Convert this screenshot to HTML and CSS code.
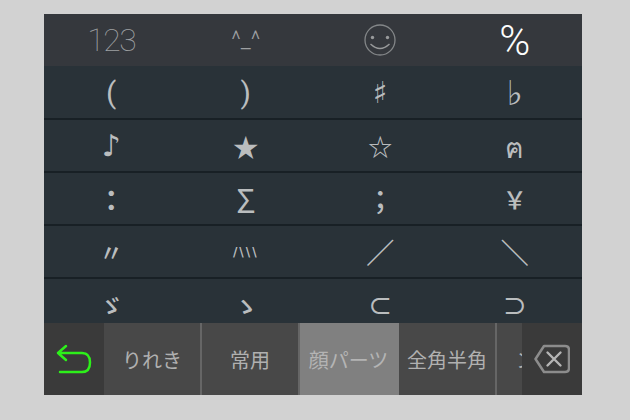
FILE: index.html
```html
<!DOCTYPE html>
<html lang="ja">
<head>
    <meta charset="UTF-8">
    <title>Keyboard</title>
    <link rel="stylesheet" href="styles.css">
</head>
<body>
    <div class="keyboard">
        <div class="top-tabs">
            <div class="top-tab tab-num">123</div>
            <div class="top-tab tab-kao">^_^</div>
            <div class="top-tab">
                <svg width="34" height="34" viewBox="0 0 34 34">
                    <circle cx="17" cy="17" r="15" fill="none" stroke="#85888a" stroke-width="1.3"/>
                    <circle cx="9.5" cy="14.5" r="1.7" fill="#9a9c9d"/>
                    <circle cx="24.5" cy="14.5" r="1.7" fill="#9a9c9d"/>
                    <path d="M7.5 21 Q17 30 26.5 21" fill="none" stroke="#9a9c9d" stroke-width="1.4"/>
                </svg>
            </div>
            <div class="top-tab tab-active">%</div>
        </div>

        <div class="grid">
            <div class="row">
                <div class="key key-paren">(</div>
                <div class="key key-paren">)</div>
                <div class="key key-music">♯</div>
                <div class="key key-flat">♭</div>
            </div>
            <div class="row">
                <div class="key key-music">♪</div>
                <div class="key key-big">★</div>
                <div class="key key-bold">☆</div>
                <div class="key key-thai">ฅ</div>
            </div>
            <div class="row">
                <div class="key key-colon">：</div>
                <div class="key key-sigma">Σ</div>
                <div class="key key-semi">；</div>
                <div class="key key-bold">￥</div>
            </div>
            <div class="row">
                <div class="key key-bold">〃</div>
                <div class="key key-small">/\\\</div>
                <div class="key key-wide">／</div>
                <div class="key key-wide">＼</div>
            </div>
            <div class="row">
                <div class="key key-bold">ゞ</div>
                <div class="key key-bold">ゝ</div>
                <div class="key key-bold">⊂</div>
                <div class="key key-bold">⊃</div>
            </div>
        </div>

        <div class="bottom-bar">
            <div class="side-btn">
                <svg width="36" height="30" viewBox="0 0 36 30">
                    <path d="M10 2 L2 9 L10 16 M2 9 H26 Q34 9 34 18.5 Q34 28 26 28 H4" fill="none" stroke="#2df01a" stroke-width="2.5" stroke-linecap="round" stroke-linejoin="round"/>
                </svg>
            </div>
            <div class="cats">
                <div class="cat">りれき</div>
                <div class="cat">常用</div>
                <div class="cat cat-on">顔パーツ</div>
                <div class="cat">全角半角</div>
                <div class="cat cat-cut">ンボル</div>
            </div>
            <div class="side-btn">
                <svg width="36" height="30" viewBox="0 0 36 30">
                    <path d="M10 2 H31 Q35 2 35 6 V24 Q35 28 31 28 H10 L1.5 15 Z" fill="none" stroke="#8c8c8c" stroke-width="2.5" stroke-linejoin="round"/>
                    <path d="M13.5 8.5 L26.5 21.5 M26.5 8.5 L13.5 21.5" fill="none" stroke="#b5b5b5" stroke-width="2.4" stroke-linecap="round"/>
                </svg>
            </div>
        </div>
    </div>
</body>
</html>
```

FILE: styles.css
```css
body {
    margin: 0;
    width: 630px;
    height: 420px;
    overflow: hidden;
    background-color: #d2d2d2;
    font-family: "Noto Sans CJK JP", "DejaVu Sans", sans-serif;
    color: #bcbfc0;
}

.keyboard {
    width: 538px;
    height: 381px;
    margin: 14px 0 0 44px;
    display: flex;
    flex-direction: column;
    background-color: #293238;
}

.top-tabs {
    display: grid;
    grid-template-columns: repeat(4, 1fr);
    height: 52px;
    background-color: #35383d;
}

.top-tab {
    display: flex;
    align-items: center;
    justify-content: center;
    color: #a0a3a5;
    font-family: Roboto, sans-serif;
    font-weight: 100;
    font-size: 32px;
    opacity: 0.99; /* grey text edges, no colour fringe */
}

.tab-num {
    letter-spacing: -1.5px;
}

.tab-kao {
    font-size: 23px;
    font-weight: 300;
}

.tab-active {
    color: #fff;
    font-size: 42px;
    font-weight: 300;
}

.grid {
    flex: 1;
    min-height: 0;
    padding-top: 1px;
    overflow: hidden;
}

.row {
    display: grid;
    grid-template-columns: repeat(4, 1fr);
    height: 53px;
    box-sizing: border-box;
    border-bottom: 2px solid #182025;
}

.key {
    display: flex;
    align-items: center;
    justify-content: center;
    font-size: 24px;
    line-height: 1;
    opacity: 0.99;
}

.key-bold {
    font-weight: 500;
}

.key-paren {
    font-family: Roboto, sans-serif;
    font-size: 30px;
}

.key-music {
    font-family: "DejaVu Sans", sans-serif;
    font-size: 30px;
    font-weight: bold;
}

.key-flat {
    font-family: "DejaVu Sans", sans-serif;
    font-size: 34px;
}

.key-big {
    font-size: 26px;
}

.key-thai {
    font-size: 28px;
    font-weight: 500;
}

.key-colon {
    font-size: 28px;
    font-weight: 700;
}

.key-semi {
    font-size: 28px;
    font-weight: 500;
}

.key-sigma {
    font-size: 32px;
}

.key-small {
    font-family: "DejaVu Sans", sans-serif;
    font-size: 12px;
    font-weight: bold;
    letter-spacing: 2px;
}

.key-wide {
    font-size: 28px;
    font-weight: 700;
}

.bottom-bar {
    display: flex;
    height: 72px;
    background-color: #484848;
}

.side-btn {
    width: 60px;
    flex: none;
    display: flex;
    align-items: center;
    justify-content: center;
    background-color: #3a3a3a;
}

.cats {
    flex: 1;
    display: flex;
    overflow: hidden;
}

.cat {
    width: 98px;
    flex: none;
    box-sizing: border-box;
    display: flex;
    align-items: center;
    justify-content: center;
    border-right: 2px solid #666;
    color: #b0b0b0;
    font-size: 20px;
}

.cat-on {
    width: 99px;
    background-color: #808080;
    color: #b4b4b4;
    border-right-color: #808080;
}

.cat-cut {
    border-right: 0;
}
```
